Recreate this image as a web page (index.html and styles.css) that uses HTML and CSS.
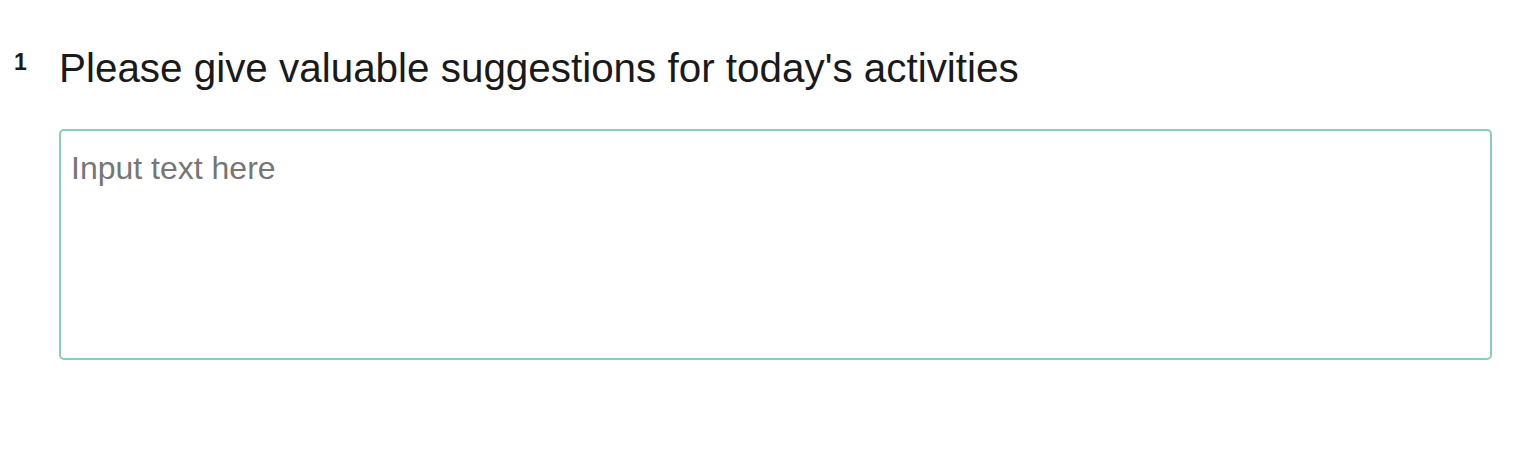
FILE: index.html
```html
<!DOCTYPE html>
<html>
<head>
<meta charset="utf-8">
<link rel="stylesheet" href="styles.css">
</head>
<body>
<div class="question">
  <div class="q-num">1</div>
  <div class="q-body">
    <div class="q-title">Please give valuable suggestions for today's activities</div>
    <textarea class="q-input" placeholder="Input text here"></textarea>
  </div>
</div>
</body>
</html>
```

FILE: styles.css
```css
html, body {
  margin: 0;
  padding: 0;
  background: #ffffff;
}
body {
  font-family: "Liberation Sans", Arial, Helvetica, sans-serif;
  color: #1a1a1a;
}
.question {
  display: flex;
  padding: 40px 28px 0 14px;
}
.q-num {
  width: 45px;
  flex: none;
  font-size: 23px;
  font-weight: bold;
  line-height: 36px;
  padding-top: 4px;
}
.q-body {
  flex: 1;
  display: flex;
  flex-direction: column;
}
.q-title {
  font-size: 40.4px;
  line-height: 56px;
  color: #1a1a1a;
  margin-bottom: 33px;
}
.q-input {
  display: block;
  box-sizing: border-box;
  width: 100%;
  height: 231px;
  border: 2px solid #88cfb3;
  border-radius: 5px;
  padding: 19px 10px;
  font-family: "Liberation Sans", Arial, Helvetica, sans-serif;
  font-size: 32px;
  line-height: 37px;
  resize: none;
  outline: none;
  background: #fff;
}
.q-input::placeholder {
  color: #767676;
}
```
